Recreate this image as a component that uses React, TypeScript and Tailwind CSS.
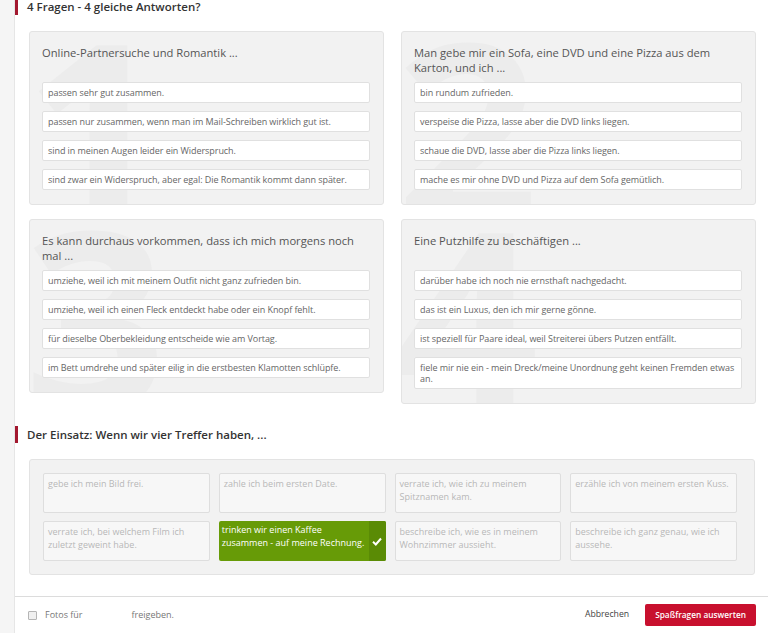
import React from 'react';

interface Question {
    num: string;
    title: string;
    answers: string[];
}

const questions: Question[] = [
    {
        num: '1',
        title: 'Online-Partnersuche und Romantik ...',
        answers: [
            'passen sehr gut zusammen.',
            'passen nur zusammen, wenn man im Mail-Schreiben wirklich gut ist.',
            'sind in meinen Augen leider ein Widerspruch.',
            'sind zwar ein Widerspruch, aber egal: Die Romantik kommt dann später.',
        ],
    },
    {
        num: '2',
        title: 'Man gebe mir ein Sofa, eine DVD und eine Pizza aus dem Karton, und ich ...',
        answers: [
            'bin rundum zufrieden.',
            'verspeise die Pizza, lasse aber die DVD links liegen.',
            'schaue die DVD, lasse aber die Pizza links liegen.',
            'mache es mir ohne DVD und Pizza auf dem Sofa gemütlich.',
        ],
    },
    {
        num: '3',
        title: 'Es kann durchaus vorkommen, dass ich mich morgens noch mal ...',
        answers: [
            'umziehe, weil ich mit meinem Outfit nicht ganz zufrieden bin.',
            'umziehe, weil ich einen Fleck entdeckt habe oder ein Knopf fehlt.',
            'für dieselbe Oberbekleidung entscheide wie am Vortag.',
            'im Bett umdrehe und später eilig in die erstbesten Klamotten schlüpfe.',
        ],
    },
    {
        num: '4',
        title: 'Eine Putzhilfe zu beschäftigen ...',
        answers: [
            'darüber habe ich noch nie ernsthaft nachgedacht.',
            'das ist ein Luxus, den ich mir gerne gönne.',
            'ist speziell für Paare ideal, weil Streiterei übers Putzen entfällt.',
            'fiele mir nie ein - mein Dreck/meine Unordnung geht keinen Fremden etwas an.',
        ],
    },
];

const stakes = [
    'gebe ich mein Bild frei.',
    'zahle ich beim ersten Date.',
    'verrate ich, wie ich zu meinem Spitznamen kam.',
    'erzähle ich von meinem ersten Kuss.',
    'verrate ich, bei welchem Film ich zuletzt geweint habe.',
    'trinken wir einen Kaffee zusammen - auf meine Rechnung.',
    'beschreibe ich, wie es in meinem Wohnzimmer aussieht.',
    'beschreibe ich ganz genau, wie ich aussehe.',
];

function SectionTitle({ children }: { children: React.ReactNode }) {
    return (
        <div className="flex items-center gap-[9px]">
            <div className="w-[3px] h-[17px] bg-[#a3182f]" />
            <h2 className="text-[11.5px] font-semibold text-[#333] leading-[16px]">{children}</h2>
        </div>
    );
}

function QuestionCard({ q }: { q: Question }) {
    return (
        <div className="relative overflow-hidden bg-[#f2f2f2] border border-[#e3e3e3] rounded-[3px] pt-[13px] pb-[14px] pl-[12px] pr-[13px]">
            {/* big watermark number */}
            <span className="absolute left-[-6px] top-[-30px] text-[250px] font-bold leading-none text-[#ececec] select-none">
                {q.num}
            </span>
            <div className="relative">
                <h3 className="min-h-[37px] text-[11.2px] leading-[15px] text-[#555]">{q.title}</h3>
                <div className="flex flex-col gap-[8px]">
                    {q.answers.map((a) => (
                        <div
                            key={a}
                            className="bg-white border border-[#e0e0e0] rounded-[2px] pl-[5px] pr-[1px] py-[4px] text-[9px] tracking-[-0.06px] leading-[11px] text-[#666]"
                        >
                            {a}
                        </div>
                    ))}
                </div>
            </div>
        </div>
    );
}

export default function App() {
    return (
        <div className="flex w-[768px] h-[633px] overflow-hidden bg-white font-['Open_Sans',sans-serif]">
            <div className="w-[15px] shrink-0 bg-[#f5f5f5] border-r border-[#e6e6e6]" />

            <div className="flex-1 flex flex-col">
                <div className="-mt-[2px]">
                    <SectionTitle>4 Fragen - 4 gleiche Antworten?</SectionTitle>
                </div>

                <div className="grid grid-cols-2 items-start gap-x-[17px] gap-y-[14px] pl-[14px] pr-[12px] mt-[16px]">
                    {questions.map((q) => (
                        <QuestionCard key={q.num} q={q} />
                    ))}
                </div>

                <div className="mt-[22px]">
                    <SectionTitle>Der Einsatz: Wenn wir vier Treffer haben, ...</SectionTitle>
                </div>

                <div className="ml-[14px] mr-[13px] mt-[16px] bg-[#f2f2f2] border border-[#e3e3e3] rounded-[3px] pl-[13px] pr-[17px] py-[13px]">
                    <div className="grid grid-cols-4 gap-x-[9px] gap-y-[8px]">
                        {stakes.map((s, i) =>
                            i === 5 ? (
                                <div key={s} className="flex h-[40px] bg-[#679b07] rounded-[2px] overflow-hidden">
                                    <div className="flex-1 pl-[3px] pt-[2px] text-[9px] leading-[13px] text-white">{s}</div>
                                    <div className="w-[17px] bg-[#5a8b05] flex items-center justify-center">
                                        <svg width="10" height="9" viewBox="0 0 10 9">
                                            <path d="M1 4.8 L3.8 7.5 L9 1.5" fill="none" stroke="#fff" strokeWidth="2" />
                                        </svg>
                                    </div>
                                </div>
                            ) : (
                                <div
                                    key={s}
                                    className="h-[40px] bg-[#f7f7f7] border border-[#dedede] rounded-[2px] px-[4px] pt-[3px] text-[9px] leading-[13px] text-[#b8b8b8]"
                                >
                                    {s}
                                </div>
                            )
                        )}
                    </div>
                </div>

                <div className="mt-auto border-t border-[#dcdcdc] h-[37px] flex items-center pl-[13px] pr-[12px]">
                    <span className="w-[9px] h-[9px] border border-[#b5b5b5] bg-[#f0f0f0] rounded-[1px]" />
                    <span className="ml-[8px] text-[9px] text-[#777]">Fotos für</span>
                    <span className="ml-[49px] text-[9px] text-[#777]">freigeben.</span>
                    <span className="ml-auto text-[8.7px] text-[#444]">Abbrechen</span>
                    <button className="ml-[16px] h-[22px] px-[10px] bg-[#c8102e] rounded-[2px] text-[8.3px] font-semibold text-white">
                        Spaßfragen auswerten
                    </button>
                </div>
            </div>
        </div>
    );
}
